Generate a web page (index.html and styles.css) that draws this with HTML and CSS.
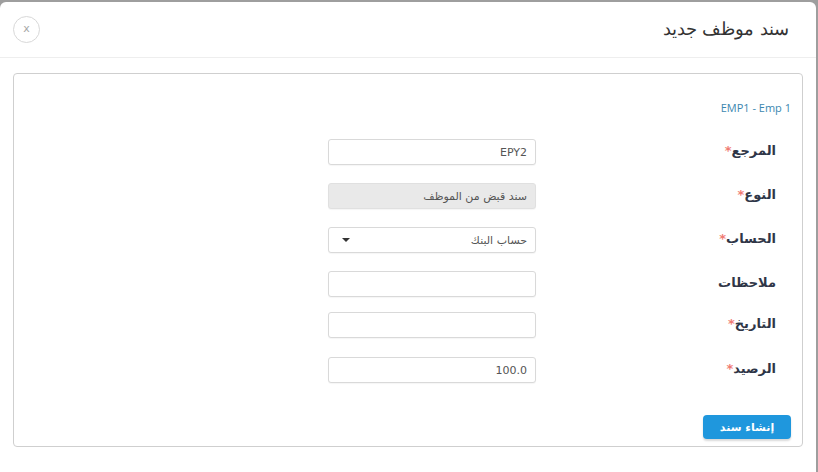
FILE: index.html
```html
<!DOCTYPE html>
<html lang="ar">
<head>
<meta charset="utf-8">
<link rel="stylesheet" href="styles.css">
</head>
<body>
<div class="modal">
  <div class="modal-header">
    <h1 class="title">سند موظف جديد</h1>
    <button class="close" type="button">x</button>
  </div>
  <div class="panel">
    <div class="emp">EMP1 - Emp 1</div>
    <div class="form">
      <div class="row">
        <label class="label">المرجع<span class="req">*</span></label>
        <div class="field">EPY2</div>
      </div>
      <div class="row">
        <label class="label">النوع<span class="req">*</span></label>
        <div class="field readonly">سند قبض من الموظف</div>
      </div>
      <div class="row">
        <label class="label">الحساب<span class="req">*</span></label>
        <div class="field select"><span>حساب البنك</span><span class="caret"></span></div>
      </div>
      <div class="row">
        <label class="label">ملاحظات</label>
        <div class="field"></div>
      </div>
      <div class="row tight">
        <label class="label">التاريخ<span class="req">*</span></label>
        <div class="field"></div>
      </div>
      <div class="row">
        <label class="label">الرصيد<span class="req">*</span></label>
        <div class="field">100.0</div>
      </div>
    </div>
    <div class="actions">
      <button class="btn" type="button">إنشاء سند</button>
    </div>
  </div>
</div>
</body>
</html>
```

FILE: styles.css
```css
* { box-sizing: border-box; }
html, body { margin: 0; padding: 0; }
body {
  background: #9e9e9e;
  width: 818px;
  height: 472px;
  overflow: hidden;
  font-family: "DejaVu Sans", "Noto Sans", sans-serif;
}
.modal {
  margin-top: 2px;
  width: 816px;
  height: 470px;
  background: #fff;
  border-radius: 6px 6px 0 0;
  direction: rtl;
  overflow: hidden;
}
.modal-header {
  height: 56px;
  border-bottom: 1px solid #eeeeee;
  display: flex;
  align-items: center;
  justify-content: space-between;
  padding: 0 27px 2px 13px;
}
.title {
  margin: 0;
  font-size: 18px;
  font-weight: 300;
  color: #333;
}
.close {
  width: 27px;
  height: 27px;
  border: 1px solid #d8d8d8;
  border-radius: 50%;
  background: #fff;
  color: #a8a8a8;
  font-size: 11px;
  font-family: "DejaVu Sans", sans-serif;
  padding: 0 0 2px 0;
  line-height: 1;
  margin-top: 2px;
}
.panel {
  margin: 15px 13px 0 13px;
  height: 374px;
  border: 1px solid #cfcfcf;
  border-radius: 4px;
  padding: 27px 11px 0 11px;
}
.emp {
  font-family: "Open Sans", sans-serif;
  font-size: 11px;
  color: #3b87b0;
  line-height: 14px;
  direction: ltr;
  text-align: right;
}
.form {
  margin-top: 24px;
  display: flex;
  flex-direction: column;
  gap: 18px;
}
.row {
  display: grid;
  grid-template-columns: 255px 208px;
  align-items: center;
  height: 26px;
}
.row.tight { margin-top: -3px; }
.row.tight + .row { margin-top: 1px; }
.label {
  padding-right: 15px;
  padding-bottom: 4px;
  font-size: 13px;
  font-weight: bold;
  color: #2f3647;
  text-align: right;
}
.req {
  color: #f07b73;
  font-weight: bold;
}
.field {
  height: 26px;
  border: 1px solid #d9d9d9;
  border-radius: 3px;
  background: #fff;
  box-shadow: 0 1px 1px rgba(0,0,0,0.04);
  padding: 0 8px;
  display: flex;
  align-items: center;
  font-size: 11px;
  color: #555;
  font-family: "DejaVu Sans", sans-serif;
}
.field.readonly {
  background: #e9e9e9;
  border-color: #e0e0e0;
}
.field.select {
  justify-content: space-between;
  padding-left: 13px;
}
.caret {
  width: 0;
  height: 0;
  border-left: 4px solid transparent;
  border-right: 4px solid transparent;
  border-top: 4px solid #333;
}
.actions {
  margin-top: 32px;
  display: flex;
}
.btn {
  width: 88px;
  height: 24px;
  border: none;
  border-radius: 4px;
  background: #1f97dd;
  color: #fff;
  font-family: "DejaVu Sans", sans-serif;
  font-size: 11px;
  font-weight: bold;
  box-shadow: 0 2px 2px rgba(0,0,0,0.15);
  padding: 0;
}
```
